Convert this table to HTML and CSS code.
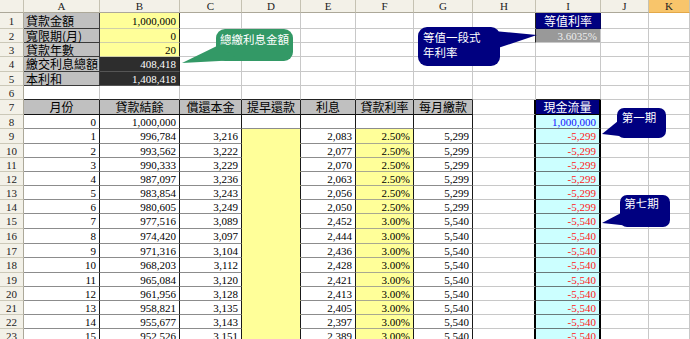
FILE: index.html
```html
<!DOCTYPE html>
<html lang="zh-Hant">
<head>
<meta charset="utf-8">
<title>貸款試算</title>
<link rel="stylesheet" href="styles.css">
</head>
<body>
<div class="sheet">
  <div class="c hd"></div><div class="c hd">A</div><div class="c hd">B</div><div class="c hd">C</div><div class="c hd">D</div><div class="c hd">E</div><div class="c hd">F</div><div class="c hd">G</div><div class="c hd">H</div><div class="c hd">I</div><div class="c hd">J</div><div class="c hd sel">K</div>

  <div class="c rn">1</div><div class="c lab">貸款金額</div><div class="c yl r bv">1,000,000</div><div class="c"></div><div class="c"></div><div class="c"></div><div class="c"></div><div class="c"></div><div class="c br"></div><div class="c nv m">等值利率</div><div class="c"></div><div class="c"></div>
  <div class="c rn">2</div><div class="c lab">寬限期(月)</div><div class="c yl r bv">0</div><div class="c"></div><div class="c"></div><div class="c"></div><div class="c"></div><div class="c"></div><div class="c br"></div><div class="c gy r">3.6035%</div><div class="c"></div><div class="c"></div>
  <div class="c rn">3</div><div class="c lab">貸款年數</div><div class="c yl r bv">20</div><div class="c"></div><div class="c"></div><div class="c"></div><div class="c"></div><div class="c"></div><div class="c"></div><div class="c"></div><div class="c"></div><div class="c"></div>
  <div class="c rn">4</div><div class="c lab">繳交利息總額</div><div class="c bk r">408,418</div><div class="c"></div><div class="c"></div><div class="c"></div><div class="c"></div><div class="c"></div><div class="c"></div><div class="c"></div><div class="c"></div><div class="c"></div>
  <div class="c rn">5</div><div class="c lab">本利和</div><div class="c bk r">1,408,418</div><div class="c"></div><div class="c"></div><div class="c"></div><div class="c"></div><div class="c"></div><div class="c"></div><div class="c"></div><div class="c"></div><div class="c"></div>
  <div class="c rn">6</div><div class="c bb"></div><div class="c bb"></div><div class="c bb"></div><div class="c bb"></div><div class="c bb"></div><div class="c bb"></div><div class="c bb"></div><div class="c"></div><div class="c bb"></div><div class="c"></div><div class="c"></div>

  <div class="c rn">7</div><div class="c th m">月份</div><div class="c th m">貸款結餘</div><div class="c th m">償還本金</div><div class="c th m">提早還款</div><div class="c th m">利息</div><div class="c th m">貸款利率</div><div class="c th m">每月繳款</div><div class="c br2"></div><div class="c nv m nvr">現金流量</div><div class="c"></div><div class="c"></div>
  <div class="c rn">8</div><div class="c d r">0</div><div class="c d r">1,000,000</div><div class="c d"></div><div class="c d"></div><div class="c d"></div><div class="c d"></div><div class="c d"></div><div class="c br2"></div><div class="c cy r blue">1,000,000</div><div class="c"></div><div class="c"></div>
  <div class="c rn">9</div><div class="c d r">1</div><div class="c d r">996,784</div><div class="c d r">3,216</div><div class="c d dy"></div><div class="c d r">2,083</div><div class="c d fy r">2.50%</div><div class="c d r">5,299</div><div class="c br2"></div><div class="c cy r">-5,299</div><div class="c"></div><div class="c"></div>
  <div class="c rn">10</div><div class="c d r">2</div><div class="c d r">993,562</div><div class="c d r">3,222</div><div class="c d dy"></div><div class="c d r">2,077</div><div class="c d fy r">2.50%</div><div class="c d r">5,299</div><div class="c br2"></div><div class="c cy r">-5,299</div><div class="c"></div><div class="c"></div>
  <div class="c rn">11</div><div class="c d r">3</div><div class="c d r">990,333</div><div class="c d r">3,229</div><div class="c d dy"></div><div class="c d r">2,070</div><div class="c d fy r">2.50%</div><div class="c d r">5,299</div><div class="c br2"></div><div class="c cy r">-5,299</div><div class="c"></div><div class="c"></div>
  <div class="c rn">12</div><div class="c d r">4</div><div class="c d r">987,097</div><div class="c d r">3,236</div><div class="c d dy"></div><div class="c d r">2,063</div><div class="c d fy r">2.50%</div><div class="c d r">5,299</div><div class="c br2"></div><div class="c cy r">-5,299</div><div class="c"></div><div class="c"></div>
  <div class="c rn">13</div><div class="c d r">5</div><div class="c d r">983,854</div><div class="c d r">3,243</div><div class="c d dy"></div><div class="c d r">2,056</div><div class="c d fy r">2.50%</div><div class="c d r">5,299</div><div class="c br2"></div><div class="c cy r">-5,299</div><div class="c"></div><div class="c"></div>
  <div class="c rn">14</div><div class="c d r">6</div><div class="c d r">980,605</div><div class="c d r">3,249</div><div class="c d dy"></div><div class="c d r">2,050</div><div class="c d fy r">2.50%</div><div class="c d r">5,299</div><div class="c br2"></div><div class="c cy r">-5,299</div><div class="c"></div><div class="c"></div>
  <div class="c rn">15</div><div class="c d r">7</div><div class="c d r">977,516</div><div class="c d r">3,089</div><div class="c d dy"></div><div class="c d r">2,452</div><div class="c d fy r">3.00%</div><div class="c d r">5,540</div><div class="c br2"></div><div class="c cy r">-5,540</div><div class="c"></div><div class="c"></div>
  <div class="c rn">16</div><div class="c d r">8</div><div class="c d r">974,420</div><div class="c d r">3,097</div><div class="c d dy"></div><div class="c d r">2,444</div><div class="c d fy r">3.00%</div><div class="c d r">5,540</div><div class="c br2"></div><div class="c cy r">-5,540</div><div class="c"></div><div class="c"></div>
  <div class="c rn">17</div><div class="c d r">9</div><div class="c d r">971,316</div><div class="c d r">3,104</div><div class="c d dy"></div><div class="c d r">2,436</div><div class="c d fy r">3.00%</div><div class="c d r">5,540</div><div class="c br2"></div><div class="c cy r">-5,540</div><div class="c"></div><div class="c"></div>
  <div class="c rn">18</div><div class="c d r">10</div><div class="c d r">968,203</div><div class="c d r">3,112</div><div class="c d dy"></div><div class="c d r">2,428</div><div class="c d fy r">3.00%</div><div class="c d r">5,540</div><div class="c br2"></div><div class="c cy r">-5,540</div><div class="c"></div><div class="c"></div>
  <div class="c rn">19</div><div class="c d r">11</div><div class="c d r">965,084</div><div class="c d r">3,120</div><div class="c d dy"></div><div class="c d r">2,421</div><div class="c d fy r">3.00%</div><div class="c d r">5,540</div><div class="c br2"></div><div class="c cy r">-5,540</div><div class="c"></div><div class="c"></div>
  <div class="c rn">20</div><div class="c d r">12</div><div class="c d r">961,956</div><div class="c d r">3,128</div><div class="c d dy"></div><div class="c d r">2,413</div><div class="c d fy r">3.00%</div><div class="c d r">5,540</div><div class="c br2"></div><div class="c cy r">-5,540</div><div class="c"></div><div class="c"></div>
  <div class="c rn">21</div><div class="c d r">13</div><div class="c d r">958,821</div><div class="c d r">3,135</div><div class="c d dy"></div><div class="c d r">2,405</div><div class="c d fy r">3.00%</div><div class="c d r">5,540</div><div class="c br2"></div><div class="c cy r">-5,540</div><div class="c"></div><div class="c"></div>
  <div class="c rn">22</div><div class="c d r">14</div><div class="c d r">955,677</div><div class="c d r">3,143</div><div class="c d dy"></div><div class="c d r">2,397</div><div class="c d fy r">3.00%</div><div class="c d r">5,540</div><div class="c br2"></div><div class="c cy r">-5,540</div><div class="c"></div><div class="c"></div>
  <div class="c rn">23</div><div class="c d r">15</div><div class="c d r">952,526</div><div class="c d r">3,151</div><div class="c d dy"></div><div class="c d r">2,389</div><div class="c d fy r">3.00%</div><div class="c d r">5,540</div><div class="c br2"></div><div class="c cy r">-5,540</div><div class="c"></div><div class="c"></div>
</div>

<svg class="callouts" width="690" height="339" viewBox="0 0 690 339" xmlns="http://www.w3.org/2000/svg">
  <g class="green">
    <rect x="216" y="29" width="77" height="32" rx="9" ry="9"/>
    <polygon points="219,45 182,63 238,60"/>
  </g>
  <text class="ctext" x="254.5" y="43.5" text-anchor="middle">總繳利息金額</text>

  <g class="navy">
    <rect x="418" y="27" width="82" height="39" rx="9" ry="9"/>
    <polygon points="494,31 537,35 498,48"/>
  </g>
  <text class="ctext" x="423" y="41.5">等值一段式</text>
  <text class="ctext" x="423" y="56.5">年利率</text>

  <g class="navy">
    <rect x="617" y="108" width="49" height="30" rx="7" ry="7"/>
    <polygon points="618,121 602,134 628,137"/>
  </g>
  <text class="ctext" x="639" y="121.5" text-anchor="middle">第一期</text>

  <g class="navy">
    <rect x="620" y="195" width="50" height="32" rx="7" ry="7"/>
    <polygon points="621,213 602,223 630,226"/>
  </g>
  <text class="ctext" x="641.5" y="207.5" text-anchor="middle">第七期</text>
</svg>
</body>
</html>
```

FILE: styles.css
```css
* {
  box-sizing: border-box;
}

html, body {
  margin: 0;
  padding: 0;
  background: #ffffff;
}

body {
  width: 690px;
  height: 339px;
  overflow: hidden;
  position: relative;
  font-family: "Liberation Serif", "Noto Sans CJK TC", serif;
  font-size: 11px;
  color: #000;
}

.sheet {
  display: grid;
  grid-template-columns: 24px 76px 80px 62px 59px 55px 58px 59px 63px 65px 48px 41px;
  grid-template-rows: 13px 16px 14px 14px 15px 14px 14px 15px 14px 15px 14px 14px 14px 14px 14px 15px 15px 14px 15px 14px 14px 14px 14px 14px;
}

.c {
  border-right: 1px solid #c8c8c8;
  border-bottom: 1px solid #c8c8c8;
  display: flex;
  align-items: center;
  padding: 0 3px;
  white-space: nowrap;
  line-height: 12px;
  min-width: 0;
  min-height: 0;
}

.r { justify-content: flex-end; }
.m { justify-content: center; }

.hd {
  background: #f3f1e8;
  border-right-color: #c5c2b2;
  border-bottom-color: #aca899;
  justify-content: center;
  font-size: 11px;
  color: #222;
}

.sel {
  background: #f8c56b;
  border-bottom-color: #e3a848;
}

.rn {
  background: #f3f1e8;
  border-right-color: #aca899;
  border-bottom-color: #cbc8b8;
  justify-content: center;
  font-size: 11px;
  color: #222;
}

.lab {
  background: #c0c0c0;
  border-right-color: #3a3a3a;
  border-bottom-color: #3a3a3a;
  padding: 0 2px;
  font-family: "Noto Sans CJK TC", sans-serif;
  font-size: 12px;
}

.yl {
  background: #ffff99;
  border-bottom-color: #d0d0a8;
}

.bv { border-right-color: #222; }

.bk {
  background: #2d2d2d;
  color: #ffffff;
  border-right-color: #222;
  border-bottom-color: #555;
}

.bb { border-bottom-color: #222; }
.br { border-right-color: #222; }
.br2 { border-right: 2px solid #000; }

.nv {
  background: #000080;
  color: #ffffff;
  font-family: "Noto Sans CJK TC", sans-serif;
  font-size: 12px;
  border-right-color: #000060;
  border-bottom-color: #000060;
}

.nvr {
  border-right: 2px solid #000;
  border-bottom-color: #000;
}

.gy {
  background: #999999;
  color: #eeeeee;
}

.th {
  background: #c0c0c0;
  border-right-color: #222;
  border-bottom-color: #111;
  font-family: "Noto Sans CJK TC", sans-serif;
  font-size: 12px;
}

.d {
  border-right-color: #1a1a1a;
  border-bottom-color: #8c8c8c;
}

.dy {
  background: #ffff99;
  border-bottom-color: #ffff99;
}

.fy {
  background: #ffff99;
  border-bottom-color: #a8a890;
}

.cy {
  background: #ccffff;
  color: #ff2020;
  border-right: 2px solid #000;
  border-bottom-color: #6a7a7a;
}

.blue { color: #1010ff; }

.callouts {
  position: absolute;
  left: 0;
  top: 0;
  pointer-events: none;
}

.green rect, .green polygon {
  fill: #339966;
}

.navy rect, .navy polygon {
  fill: #000080;
}

.ctext {
  fill: #ffffff;
  font-family: "Noto Sans CJK TC", sans-serif;
  font-size: 11.5px;
}
```
